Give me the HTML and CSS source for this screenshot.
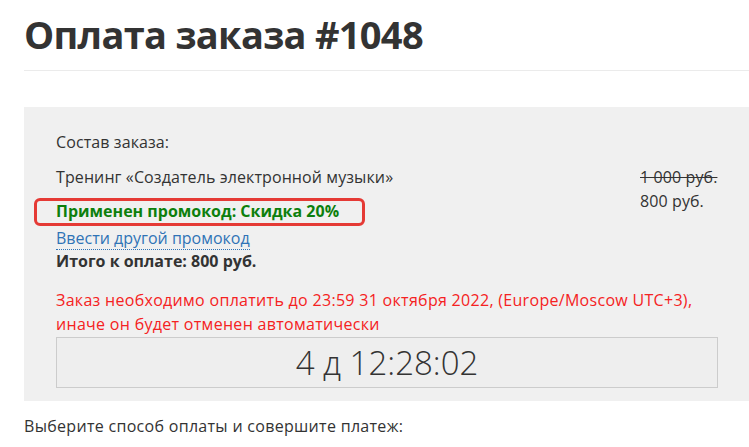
FILE: index.html
```html
<!DOCTYPE html>
<html lang="ru">
<head>
<meta charset="utf-8">
<title>Оплата заказа #1048</title>
<link rel="stylesheet" href="styles.css">
</head>
<body>
<div class="page">
  <h1 class="title">Оплата заказа #1048</h1>
  <div class="divider"></div>
  <div class="order">
    <div class="order-label">Состав заказа:</div>
    <div class="order-row">
      <div class="order-main">
        <div class="item-name">Тренинг «Создатель электронной музыки»</div>
        <div class="promo"><span class="promo-text">Применен промокод: Скидка 20%</span></div>
        <div class="promo-link-row"><a class="promo-link" href="#">Ввести другой промокод</a></div>
        <div class="total">Итого к оплате: 800 руб.</div>
      </div>
      <div class="prices">
        <div class="price-old">1 000 руб.</div>
        <div class="price-new">800 руб.</div>
      </div>
    </div>
    <div class="deadline">Заказ необходимо оплатить до 23:59 31 октября 2022, (Europe/Moscow UTC+3),<br>иначе он будет отменен автоматически</div>
    <div class="timer">4 д 12:28:02</div>
  </div>
  <div class="choose">Выберите способ оплаты и совершите платеж:</div>
</div>
</body>
</html>
```
FILE: styles.css
```css
html, body {
  margin: 0;
  padding: 0;
  background: #ffffff;
}
body {
  font-family: "Open Sans", "Liberation Sans", sans-serif;
  font-size: 16px;
  line-height: 24px;
  color: #333333;
  overflow: hidden;
}
.page {
  padding-left: 24px;
  width: 725px;
}
.title {
  margin: 0;
  padding-top: 8px;
  font-size: 38px;
  line-height: 52px;
  font-weight: 700;
  color: #333333;
  letter-spacing: -0.7px;
}
.divider {
  margin-top: 10px;
  border-top: 1px solid #ebebeb;
}
.order {
  margin-top: 36px;
  background: #f0f0f0;
  padding: 23px 31px 13px 32px;
}
.order-label,
.item-name,
.prices,
.choose {
  letter-spacing: 0.1px;
}
.order-row {
  display: flex;
  justify-content: space-between;
  margin-top: 11px;
}
.order-main {
  flex: 1;
}
.promo {
  margin-top: 10px;
}
.promo-text {
  position: relative;
  font-weight: 700;
  color: #0d7f0d;
}
.promo-text::after {
  content: "";
  position: absolute;
  left: -22px;
  top: -2px;
  width: 325px;
  height: 22px;
  border: 3px solid #e53a35;
  border-radius: 6px;
}
.promo-link-row {
  line-height: 22px;
  margin-top: 4px;
}
.promo-link {
  color: #2f73b6;
  text-decoration: none;
  border-bottom: 1px dotted #2f73b6;
}
.total {
  font-weight: 700;
}
.prices {
  width: 78px;
  white-space: nowrap;
}
.price-old {
  text-decoration: line-through;
}
.deadline {
  margin-top: 15px;
  color: #f52222;
  letter-spacing: 0.3px;
}
.timer {
  margin-top: 1px;
  height: 49px;
  border: 1px solid #cccccc;
  background: #eeeeee;
  text-align: center;
  font-size: 33px;
  line-height: 49px;
  font-weight: 300;
  color: #333333;
}
.choose {
  margin-top: 13px;
  letter-spacing: 0.3px;
}
```
